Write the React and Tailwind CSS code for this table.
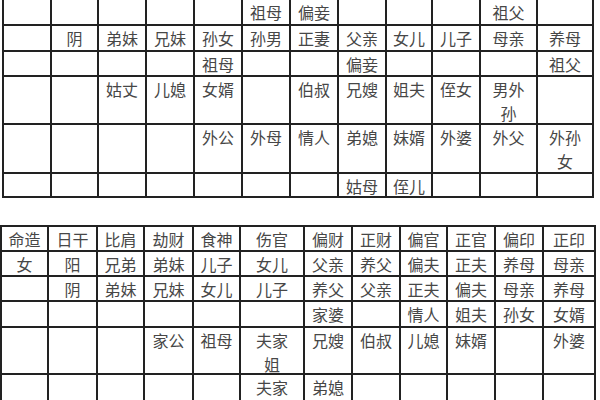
import React from "react";

const topCols = [48, 47, 48, 48, 48, 48, 48, 48, 46, 48, 57, 56];
const topRows = [
  { h: "h-[26px]", cells: ["", "", "", "", "", "祖母", "偏妾", "", "", "", "祖父", ""] },
  { h: "h-[26px]", cells: ["", "阴", "弟妹", "兄妹", "孙女", "孙男", "正妻", "父亲", "女儿", "儿子", "母亲", "养母"] },
  { h: "h-[25px]", cells: ["", "", "", "", "祖母", "", "", "偏妾", "", "", "", "祖父"] },
  { h: "h-[48px]", cells: ["", "", "姑丈", "儿媳", "女婿", "", "伯叔", "兄嫂", "姐夫", "侄女", "男外\n孙", ""] },
  { h: "h-[49px]", cells: ["", "", "", "", "外公", "外母", "情人", "弟媳", "妹婿", "外婆", "外父", "外孙\n女"] },
  { h: "h-[24px]", cells: ["", "", "", "", "", "", "", "姑母", "侄儿", "", "", ""] },
];

const bottomCols = [47, 49, 47, 49, 47, 64, 48, 48, 47, 48, 48, 52];
const bottomRows = [
  { h: "h-[25px]", cells: ["命造", "日干", "比肩", "劫财", "食神", "伤官", "偏财", "正财", "偏官", "正官", "偏印", "正印"] },
  { h: "h-[25px]", cells: ["女", "阳", "兄弟", "弟妹", "儿子", "女儿", "父亲", "养父", "偏夫", "正夫", "养母", "母亲"] },
  { h: "h-[25px]", cells: ["", "阴", "弟妹", "兄妹", "女儿", "儿子", "养父", "父亲", "正夫", "偏夫", "母亲", "养母"] },
  { h: "h-[26px]", cells: ["", "", "", "", "", "", "家婆", "", "情人", "姐夫", "孙女", "女婿"] },
  { h: "h-[47px]", cells: ["", "", "", "家公", "祖母", "夫家\n姐", "兄嫂", "伯叔", "儿媳", "妹婿", "", "外婆"] },
  { h: "h-[48px]", cells: ["", "", "", "", "", "夫家", "弟媳", "", "", "", "", ""] },
];

const Grid = ({ cols, rows, className }) => (
  <div className={`flex flex-col border-l-2 border-[#222] w-fit ${className}`}>
    {rows.map((row, r) => (
      <div key={r} className={`flex ${row.h}`}>
        {row.cells.map((text, c) => (
          <div
            key={c}
            style={{ width: cols[c] }}
            className="border-r-2 border-b-2 border-[#222] text-center whitespace-pre-line text-[16px] leading-[24px] text-[#474747] shrink-0"
          >
            {text}
          </div>
        ))}
      </div>
    ))}
  </div>
);

export default function App() {
  return (
    <div
      className="w-[600px] h-[400px] overflow-hidden bg-white"
      style={{ fontFamily: '"Noto Sans CJK SC", "Noto Sans", sans-serif' }}
    >
      <Grid cols={topCols} rows={topRows} className="ml-[2px]" />
      <Grid cols={bottomCols} rows={bottomRows} className="mt-[27px] border-t-2" />
    </div>
  );
}
